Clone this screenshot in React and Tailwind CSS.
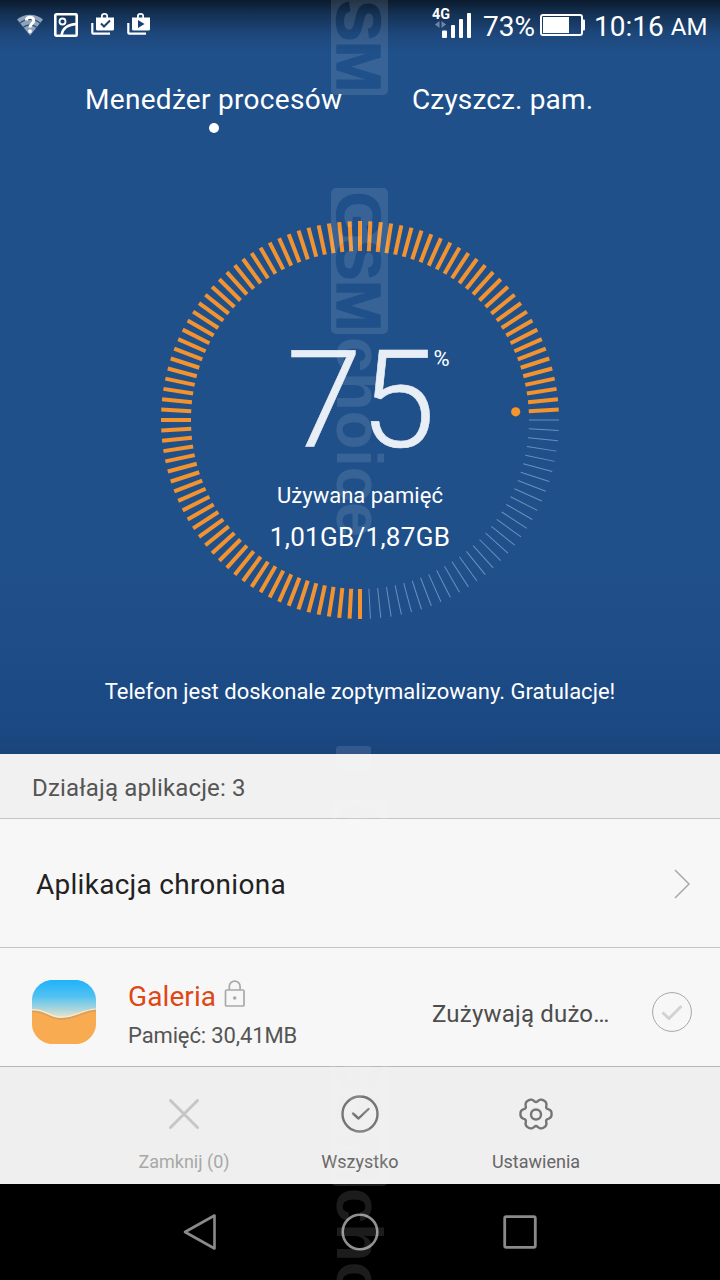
import { useState } from "react";

const TICKS = 120;

const WifiUnknown = () => (
  <svg width="26" height="22" viewBox="0 0 26 22">
    <path d="M13 21.500 0 5.500C7-1 19-1 26 5.500z" fill="#8fa3ba" />
    <path
      d="M2.500 9.500c6-5.500 15-5.500 21 0M6 13.500c4-3.600 10-3.600 14 0"
      fill="none"
      stroke="#2a4f7d"
      strokeWidth="1.200"
    />
    <path
      d="M9.300 6.500c0-4.500 7.400-4.500 7.400 0 0 3-3.700 3.200-3.700 7"
      fill="none"
      stroke="#fff"
      strokeWidth="3"
    />
    <rect x="11.300" y="15.500" width="3.400" height="3.400" rx="1" fill="#fff" />
  </svg>
);

const PictureIcon = () => (
  <svg width="24" height="24" viewBox="0 0 24 24" fill="none" stroke="#fff">
    <rect x="1.300" y="1.300" width="21.400" height="21.400" rx="1" strokeWidth="2.600" />
    <circle cx="8.500" cy="8.500" r="3" strokeWidth="1.800" />
    <path d="M7.500 22c1-6 6-10.500 15-11" strokeWidth="2.400" />
  </svg>
);

const BagIcon = ({ children }) => (
  <svg width="24" height="24" viewBox="0 0 24 24" fill="none">
    <path d="M1.300 10v9.700q0 1 1 1H19" stroke="#fff" strokeWidth="2.200" />
    <path d="M5 4.500h5V3q0-3 3.500-3T17 3v1.500h6V16q0 1.500-1.500 1.500H6.500Q5 17.500 5 16z" fill="#fff" />
    <path d="M11.800 4.500V3q0-1.200 1.800-1.200T15.300 3v1.500z" fill="#1c4070" />
    {children}
  </svg>
);

const Signal = () => (
  <svg width="42" height="32" viewBox="0 0 42 32" fill="#fff">
    <text
      x="0"
      y="11"
      fontFamily="Roboto, sans-serif"
      fontSize="14"
      fontWeight="700"
      textLength="18"
      lengthAdjust="spacingAndGlyphs"
    >
      4G
    </text>
    <path d="M7.500 13v7L3 16.500zM9.500 13v7l4.500-3.500z" fill="#6f87a5" />
    <rect x="10" y="22.500" width="5" height="7.500" rx="1" />
    <rect x="19" y="17" width="4" height="13" rx="1" />
    <rect x="27" y="11" width="4" height="19" rx="1" />
    <rect x="35" y="5" width="4" height="25" rx="1" />
  </svg>
);

const Battery = () => (
  <svg width="46" height="22" viewBox="0 0 46 22">
    <rect x="1" y="1" width="41" height="20" rx="2" fill="none" stroke="#fff" strokeWidth="2" />
    <rect x="3" y="3" width="26" height="16" fill="#fff" />
    <rect x="42" y="5.500" width="3" height="11" rx="1" fill="#fff" />
  </svg>
);

const Ring = ({ percent }) => {
  const used = (TICKS * percent) / 100;
  return (
    <svg width="400" height="400" viewBox="0 0 400 400" className="col-start-1 row-start-1">
      {Array.from({ length: TICKS }, (_, i) => (
        <line
          key={i}
          x1="200"
          x2="200"
          y1="369"
          y2="399"
          stroke={i < used ? "#f39330" : "#6b8fbd"}
          strokeWidth={i < used ? 4 : 1}
          transform={`rotate(${i * 3} 200 200)`}
        />
      ))}
      <circle cx="355.700" cy="191.800" r="4.600" fill="#f8942a" />
    </svg>
  );
};

// six rounded teeth
const gearPath =
  Array.from({ length: 120 }, (_, i) => {
    const a = (i * Math.PI) / 60;
    const r = 14.2 + 1.8 * Math.cos(6 * a) - 0.45 * Math.cos(12 * a);
    return `${i ? "L" : "M"}${(20 + r * Math.cos(a)).toFixed(2)} ${(20 + r * Math.sin(a)).toFixed(2)}`;
  }).join("") + "z";

const GearIcon = () => (
  <svg width="40" height="40" viewBox="0 0 40 40" fill="none" stroke="#757575" strokeWidth="2.400">
    <path d={gearPath} strokeLinejoin="round" />
    <circle cx="20" cy="20.500" r="5" />
  </svg>
);

const CrossIcon = () => (
  <svg width="40" height="40" viewBox="0 0 40 40" fill="none">
    <path d="M6.500 6.500l27 27M33.500 6.500l-27 27" stroke="#c6c6c6" strokeWidth="3" strokeLinecap="round" />
  </svg>
);

const CheckAllIcon = () => (
  <svg width="40" height="40" viewBox="0 0 40 40" fill="none" stroke="#757575" strokeWidth="2.400">
    <circle cx="20" cy="20" r="17.500" />
    <path d="M13 19.500l5.500 5 10-9.500" strokeLinecap="round" strokeLinejoin="round" />
  </svg>
);

const GalleryIcon = () => (
  <svg width="64" height="64" viewBox="0 0 64 64" className="shrink-0">
    <defs>
      <linearGradient id="sky" x1="0" y1="0" x2="0" y2="1">
        <stop offset="0" stopColor="#1fb3fb" />
        <stop offset="0.250" stopColor="#4fc1f3" />
        <stop offset="0.480" stopColor="#b5d8d8" />
        <stop offset="0.620" stopColor="#fbe9c8" />
      </linearGradient>
      <clipPath id="tile">
        <path d="M20 0h24c10 0 20 9 20 20v24c0 10-9 20-20 20H20C10 64 0 55 0 44V20C0 9 10 0 20 0z" />
      </clipPath>
    </defs>
    <g clipPath="url(#tile)">
      <rect width="64" height="64" fill="url(#sky)" />
      <path d="M0 30c12-1 17 7 28 7.500C42 38 50 30 64 29.500" fill="none" stroke="#fbe9c8" strokeWidth="2" />
      <path d="M0 31c12-1 17 7 28 7.500C42 39 50 31 64 31v33H0z" fill="#f9ab52" />
      <path d="M0 31.500c12-1 17 7 28 7.500C42 39.500 50 31.500 64 30.500" fill="none" stroke="#d9a05e" strokeWidth="1.800" />
    </g>
  </svg>
);

const LockIcon = () => (
  <svg width="22" height="28" viewBox="0 0 22 28" fill="none" stroke="#a9a9a9" strokeWidth="1.700">
    <rect x="1.500" y="10" width="18.500" height="16" rx="1" />
    <path d="M5.300 10V6.500a5.400 5.400 0 0 1 10.800 0V10" />
    <circle cx="10.700" cy="18" r="1.800" fill="#a9a9a9" stroke="none" />
  </svg>
);

// stamp running down the middle of the screen
const Stamp = () => (
  <svg
    width="60"
    height="1280"
    viewBox="330 0 60 1280"
    className="pointer-events-none absolute left-[330px] top-0 overflow-visible"
  >
    <defs>
      <mask id="gsm" maskUnits="userSpaceOnUse" x="0" y="0" width="146" height="57">
        <rect width="146" height="57" rx="5" fill="#fff" />
        <text
          x="4"
          y="51"
          fontFamily="Liberation Sans, sans-serif"
          fontSize="63"
          fontWeight="700"
          textLength="139"
          lengthAdjust="spacingAndGlyphs"
          fill="#000"
          stroke="#000"
          strokeWidth="1.500"
          strokeLinejoin="round"
        >
          GSM
        </text>
      </mask>
    </defs>
    <g fill="#fff" fillOpacity="0.110">
      {[-51, 188, 800, 1040].map((y) => (
        <g key={y} transform={`translate(388 ${y}) rotate(90)`}>
          <rect width="146" height="57" mask="url(#gsm)" />
        </g>
      ))}
      <rect x="336" y="746" width="35" height="24" rx="3" />
      {[340, 1191].map((y) => (
        <text
          key={y}
          transform={`translate(336.500 ${y - 3}) rotate(90)`}
          fontFamily="Liberation Sans, sans-serif"
          fontSize="65"
          fontWeight="700"
          textLength="200"
          lengthAdjust="spacingAndGlyphs"
        >
          choice
        </text>
      ))}
    </g>
  </svg>
);

const StatusBar = () => (
  <div className="flex h-[50px] items-start pl-[17px] text-[28px] text-white">
    <div className="mt-[13px] flex">
      <div className="mt-[1px] w-[37px]">
        <WifiUnknown />
      </div>
      <div className="w-[37px]">
        <PictureIcon />
      </div>
      <div className="w-9">
        <BagIcon>
          <path d="M10 10.500l3 3 6-6" stroke="#1c4070" strokeWidth="2" />
        </BagIcon>
      </div>
      <BagIcon>
        <path d="M11 7v8l6.500-4z" fill="#1c4070" />
      </BagIcon>
    </div>
    <div className="ml-[281px] mt-[8px]">
      <Signal />
    </div>
    <span className="ml-[9px] w-[57px] leading-[53px]">73%</span>
    <div className="mt-[14px] w-[54px]">
      <Battery />
    </div>
    <span className="leading-[53px]">10:16</span>
    <span className="ml-[7px] text-[24px] leading-[54px]">AM</span>
  </div>
);

const App = () => {
  const [selected, setSelected] = useState(false);

  return (
    <main className="relative flex h-[1280px] w-[720px] flex-col overflow-hidden font-[Roboto,sans-serif]">
      <section className="flex h-[754px] flex-col bg-[linear-gradient(#0b1b2d_0px,#143154_14px,#1d477b_34px,#20508a_52px,#20508a_560px,#1b4882_735px,#1a437a_754px)]">
        <StatusBar />
        <nav className="flex h-[90px] whitespace-nowrap pl-[85px] pt-[30px] text-[28px] leading-10 text-white">
          <div className="w-[327px]">
            <p className="tracking-[0.3px]">Menedżer procesów</p>
            <div className="ml-[124px] mt-[3px] h-[10px] w-[10px] rounded-full bg-white" />
          </div>
          <p className="tracking-[0.15px]">Czyszcz. pam.</p>
        </nav>
        <div className="mx-auto mt-20 grid h-[400px] w-[400px]">
          <Ring percent={75} />
          <div className="col-start-1 row-start-1 flex flex-col items-center pt-[112px] text-white">
            <div className="flex items-start pl-[16px]">
              <span className="text-[136px] font-light leading-[138px] tracking-[-2px] text-[#e8eef6] [-webkit-text-stroke:0.6px_#e8eef6]">
                75
              </span>
              <span className="mt-[14px] text-[22px] leading-[26px]">%</span>
            </div>
            <p className="mt-[12px] text-[22px] leading-7">Używana pamięć</p>
            <p className="mt-[12px] text-[26px] leading-[30px] tracking-[0.3px]">1,01GB/1,87GB</p>
          </div>
        </div>
        <p className="mt-[57px] text-center text-[22px] leading-[30px] text-white">
          Telefon jest doskonale zoptymalizowany. Gratulacje!
        </p>
      </section>

      <div className="flex h-[65px] items-center border-b border-[#c4c4c4] bg-[#f1f1f1] pl-8 pt-[3px] text-[24px] tracking-[0.150px] text-[#555]">
        Działają aplikacje: 3
      </div>
      <div className="flex h-[129px] items-center justify-between border-b border-[#c4c4c4] bg-[#f7f7f7] pl-9 pr-[30px] pt-[2px] text-[28px] tracking-[0.270px] text-[#222]">
        <span className="pt-[2px]">Aplikacja chroniona</span>
        <svg width="16" height="30" viewBox="0 0 16 30" fill="none" stroke="#a8a8a8" strokeWidth="1.500">
          <path d="M1 1l14 14L1 29" />
        </svg>
      </div>
      <div className="flex h-[119px] items-start border-b border-[#b8b8b8] bg-[#f7f7f7] pl-8 pt-8">
        <GalleryIcon />
        <div className="ml-8 w-[304px]">
          <div className="flex h-[34px] items-start gap-[8px]">
            <span className="text-[28px] leading-[34px] tracking-[0.1px] text-[#dd4814]">Galeria</span>
            <LockIcon />
          </div>
          <p className="mt-[7px] text-[22px] leading-[30px] tracking-[-0.130px] text-[#555]">Pamięć: 30,41MB</p>
        </div>
        <span className="w-[220px] text-[24px] leading-[68px] tracking-[0.2px] text-[#4d4d4d]">Zużywają dużo…</span>
        <button onClick={() => setSelected(!selected)} className="mt-[12px]">
          <svg width="40" height="40" viewBox="0 0 40 40" fill="none">
            <circle cx="20" cy="20" r="19.400" stroke="#a6a6a6" />
            <path d="M10.500 20.500l6.500 6 12.500-12.500" stroke={selected ? "#dd4814" : "#d2d2d2"} strokeWidth="3" />
          </svg>
        </button>
      </div>

      <div className="grid h-[117px] grid-cols-3 bg-[#efefef] px-24 pt-[27px] text-center text-[18px] leading-6 text-[#666]">
        <div className="flex flex-col items-center gap-4 text-[#a8a8a8]">
          <CrossIcon />
          Zamknij (0)
        </div>
        <div className="flex flex-col items-center gap-4">
          <CheckAllIcon />
          Wszystko
        </div>
        <div className="flex flex-col items-center gap-4">
          <GearIcon />
          Ustawienia
        </div>
      </div>

      <div className="grid h-24 grid-cols-3 place-items-center bg-black px-[120px]">
        <svg width="40" height="40" viewBox="0 0 40 40" fill="none" stroke="#8a8a8a" strokeWidth="2.600">
          <path d="M34.500 3.500v33L5 20z" strokeLinejoin="round" />
        </svg>
        <svg width="40" height="40" viewBox="0 0 40 40" fill="none" stroke="#8f8f8f" strokeWidth="2.600">
          <circle cx="20" cy="20" r="17.300" />
        </svg>
        <svg width="40" height="40" viewBox="0 0 40 40" fill="none" stroke="#8a8a8a" strokeWidth="2.800">
          <rect x="4.700" y="4.700" width="30.600" height="30.600" rx="1.500" />
        </svg>
      </div>
      <Stamp />
    </main>
  );
};

export default App;
